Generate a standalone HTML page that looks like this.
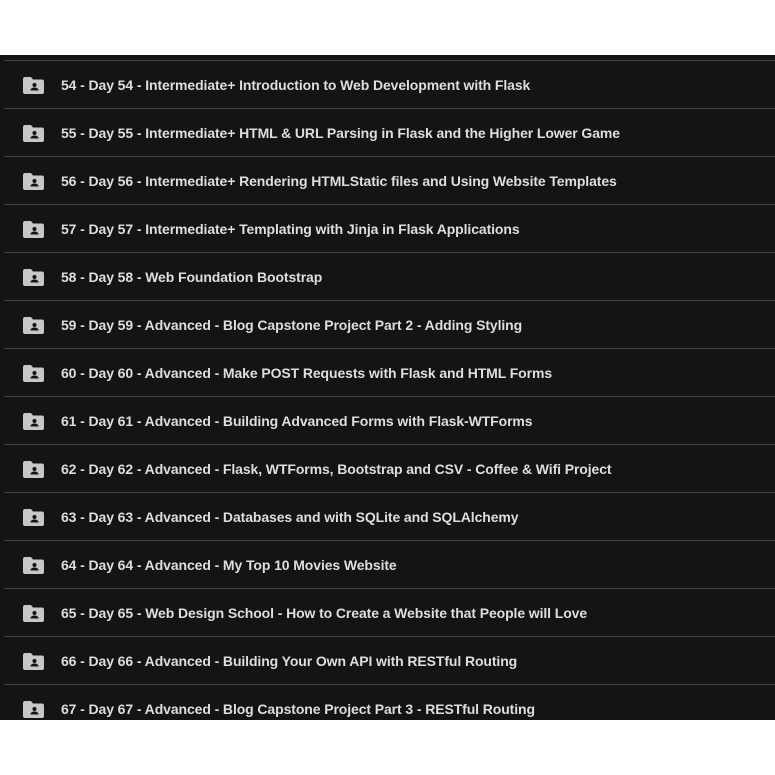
<!DOCTYPE html><html><head><style>
body{margin:0;width:775px;height:775px;background:#fff;position:relative;overflow:hidden;font-family:"Liberation Sans",sans-serif}
#d{position:absolute;left:0;top:55px;width:775px;height:665px;background:#141414;overflow:hidden}
.r{position:absolute;left:4px;right:0;height:48px;border-top:1px solid #444}
.r svg{position:absolute;left:19px;top:16px}
.r span{position:absolute;left:57px;top:16px;font-size:14px;color:#dedede;font-weight:bold;letter-spacing:-0.1px;white-space:nowrap}
</style></head><body><div id="d">
<script>
var t=["54 - Day 54 - Intermediate+ Introduction to Web Development with Flask","55 - Day 55 - Intermediate+ HTML & URL Parsing in Flask and the Higher Lower Game","56 - Day 56 - Intermediate+ Rendering HTMLStatic files and Using Website Templates","57 - Day 57 - Intermediate+ Templating with Jinja in Flask Applications","58 - Day 58 - Web Foundation Bootstrap","59 - Day 59 - Advanced - Blog Capstone Project Part 2 - Adding Styling","60 - Day 60 - Advanced - Make POST Requests with Flask and HTML Forms","61 - Day 61 - Advanced - Building Advanced Forms with Flask-WTForms","62 - Day 62 - Advanced - Flask, WTForms, Bootstrap and CSV - Coffee & Wifi Project","63 - Day 63 - Advanced - Databases and with SQLite and SQLAlchemy","64 - Day 64 - Advanced - My Top 10 Movies Website","65 - Day 65 - Web Design School - How to Create a Website that People will Love","66 - Day 66 - Advanced - Building Your Own API with RESTful Routing","67 - Day 67 - Advanced - Blog Capstone Project Part 3 - RESTful Routing"];
var h="";t.forEach(function(s,i){h+='<div class="r" style="top:'+(5+48*i)+'px"><svg width="21" height="17" viewBox="0 0 21 17"><path d="M2 0h6l2 2.5h9a2 2 0 0 1 2 2V15a2 2 0 0 1-2 2H2a2 2 0 0 1-2-2V2a2 2 0 0 1 2-2z" fill="#c7c7c7"/><circle cx="11.5" cy="8" r="2" fill="#141414"/><path d="M7.5 13.5c0-2 2-3 4-3s4 1 4 3z" fill="#141414"/></svg><span></span></div>'});
document.write(h);var sp=document.querySelectorAll(".r span");t.forEach(function(s,i){sp[i].textContent=s});
</script></div></body></html>
